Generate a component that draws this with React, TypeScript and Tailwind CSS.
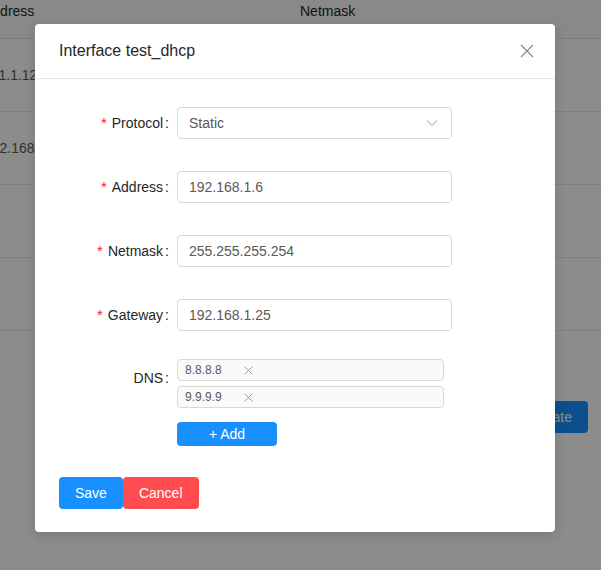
import { useState } from 'react';

const font = { fontFamily: '"Liberation Sans", Arial, sans-serif' };

function XIcon({ size = 14, className = '' }: { size?: number; className?: string }) {
  return (
    <svg width={size} height={size} viewBox="0 0 14 14" className={className} fill="none">
      <path d="M1 1L13 13M13 1L1 13" stroke="currentColor" strokeWidth="1.3" />
    </svg>
  );
}

function Field({ label, required, children, top }: { label: string; required?: boolean; children: React.ReactNode; top?: boolean }) {
  return (
    <div className={`flex ${top ? 'items-start' : 'items-center'}`}>
      <div className={`w-[118px] flex justify-end text-[14px] text-[#262626] ${top ? 'h-[40px] -mt-px items-center' : 'items-center'}`}>
        {required && <span className="text-[#f5222d] mr-[5px] text-[15px]">*</span>}
        <span>{label}</span>
        <span className="ml-0.5 mr-2">:</span>
      </div>
      <div>{children}</div>
    </div>
  );
}

function TextInput({ value }: { value: string }) {
  return (
    <div className="w-[275px] h-[32px] border border-[#d9d9d9] rounded-[4px] bg-white px-[11px] flex items-center text-[14px] text-[#595959]">
      {value}
    </div>
  );
}

const rows = [
  { ip: '10.1.1.12', shift: '-ml-[21px]' },
  { ip: '192.168.1.6', shift: '-ml-[16px]' },
  { ip: '', shift: '' },
  { ip: '', shift: '' },
];

export default function App() {
  const [dns] = useState(['8.8.8.8', '9.9.9.9']);

  return (
    <div className="relative w-[601px] h-[570px] overflow-hidden bg-white" style={font}>
      {/* page under the modal */}
      <div className="text-[14px] text-[#262626]">
        <div className="flex h-[39px] border-b border-[#e8e8e8] bg-[#fafafa] items-start pt-[1px] leading-[20px]">
          <div className="w-[300px] -ml-[17px] whitespace-nowrap">Address</div>
          <div className="ml-[17px]">Netmask</div>
        </div>
        {rows.map((r, i) => (
          <div key={i} className="flex h-[73px] border-b border-[#e8e8e8] items-center text-[#595959]">
            <div className={`${r.shift} whitespace-nowrap`}>{r.ip}</div>
          </div>
        ))}
        <div className="flex justify-end pr-[13px] pt-[70px]">
          <button className="h-[32px] px-4 rounded-[4px] bg-[#1890ff] text-white text-[14px]">Create</button>
        </div>
      </div>

      {/* mask */}
      <div className="absolute inset-0 bg-black/45" />

      {/* modal */}
      <div className="absolute left-[35px] top-[24px] w-[520px] bg-white rounded-[4px] shadow-[0_4px_12px_rgba(0,0,0,0.15)]">
        <div className="flex items-center justify-between px-6 py-4 border-b border-[#e8e8e8]">
          <span className="text-[16px] leading-[22px] text-[#262626]">Interface test_dhcp</span>
          <XIcon size={14} className="text-[#8c8c8c] mr-[-3px]" />
        </div>

        <div className="pl-6 pr-6 pt-[28px] pb-[23px]">
          <div className="flex flex-col gap-[32px]">
            <Field label="Protocol" required>
              <div className="w-[275px] h-[32px] border border-[#d9d9d9] rounded-[4px] bg-white pl-[11px] pr-[13px] flex items-center justify-between text-[14px] text-[#595959]">
                <span>Static</span>
                <svg width="12" height="12" viewBox="0 0 12 12" fill="none">
                  <path d="M1 3.5L6 8.5L11 3.5" stroke="#bfbfbf" strokeWidth="1.1" />
                </svg>
              </div>
            </Field>
            <Field label="Address" required>
              <TextInput value="192.168.1.6" />
            </Field>
            <Field label="Netmask" required>
              <TextInput value="255.255.255.254" />
            </Field>
            <Field label="Gateway" required>
              <TextInput value="192.168.1.25" />
            </Field>
          </div>

          <div className="mt-[28px]">
            <Field label="DNS" top>
              <div className="flex flex-col gap-[5px]">
                {dns.map(d => (
                  <div
                    key={d}
                    className="w-[267px] h-[22px] border border-[#d9d9d9] rounded-[4px] bg-[#fafafa] pl-[7px] flex items-center text-[12px] text-[#595959]"
                  >
                    <span className="w-[59px]">{d}</span>
                    <XIcon size={9} className="text-[#8c8c8c]" />
                  </div>
                ))}
                <button className="mt-[9px] w-[100px] h-[24px] rounded-[4px] bg-[#1890ff] text-white text-[14px] flex items-center justify-center">
                  + Add
                </button>
              </div>
            </Field>
          </div>

          <div className="flex mt-[31px]">
            <button className="h-[32px] px-4 rounded-[4px] bg-[#1890ff] text-white text-[14px]">Save</button>
            <button className="h-[32px] px-4 rounded-[4px] bg-[#ff4d4f] text-white text-[14px]">Cancel</button>
          </div>
        </div>
      </div>
    </div>
  );
}
